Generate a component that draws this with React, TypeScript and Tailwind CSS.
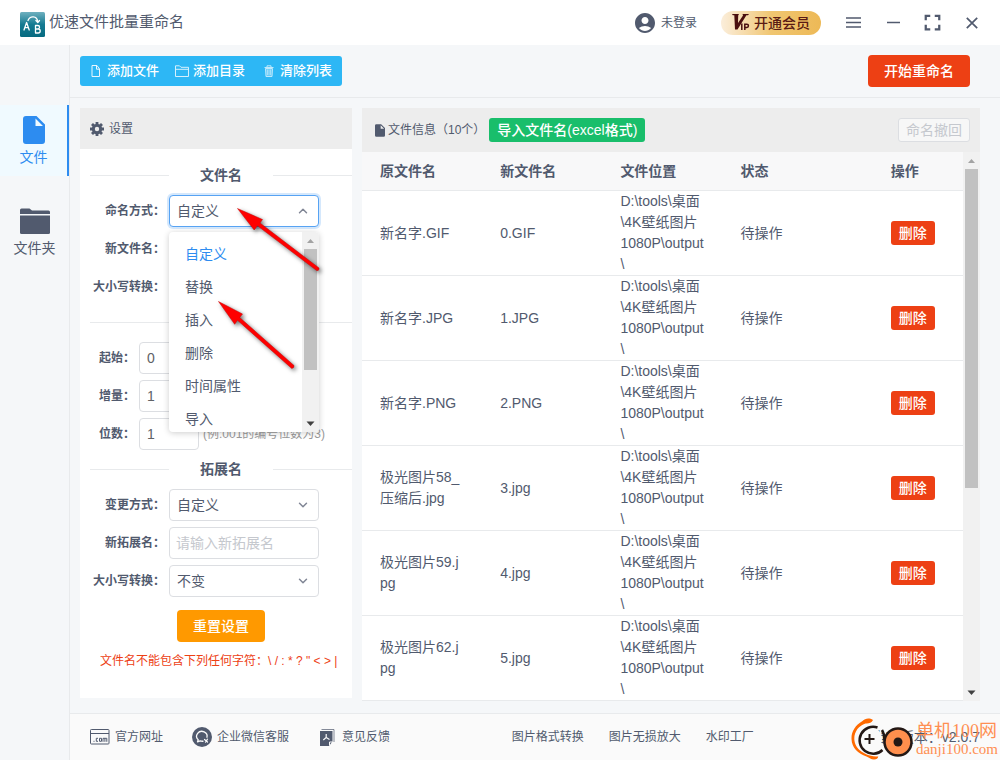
import type { ReactNode } from "react";
import { ChevronDown, ChevronUp } from "lucide-react";
import { MdAccountCircle, MdFullscreen } from "react-icons/md";

const files = [
  { name: "新名字.GIF", next: "0.GIF" },
  { name: "新名字.JPG", next: "1.JPG" },
  { name: "新名字.PNG", next: "2.PNG" },
  { name: "极光图片58_压缩后.jpg", next: "3.jpg" },
  { name: "极光图片59.jpg", next: "4.jpg" },
  { name: "极光图片62.jpg", next: "5.jpg" },
];

const location = "D:\\tools\\桌面\n\\4K壁纸图片\n1080P\\output\n\\";

const modes = ["自定义", "替换", "插入", "删除", "时间属性", "导入"];

/* ---------- icons ---------- */

function LogoIcon() {
  return (
    <svg width="25" height="25" viewBox="0 0 25 25" fill="none" aria-hidden="true">
      <defs>
        <linearGradient id="logo-bg" x1="0" y1="0" x2="0" y2="1">
          <stop offset="0" stopColor="#6fb0bf" />
          <stop offset="0.5" stopColor="#157a91" />
          <stop offset="1" stopColor="#066a80" />
        </linearGradient>
      </defs>
      <rect width="25" height="25" rx="1.5" fill="url(#logo-bg)" />
      <g stroke="#fff" strokeWidth="1.3" strokeLinecap="round" strokeLinejoin="round">
        <path d="M4 18 6.6 10.500 9.200 18M4.800 15.700h3.600" />
        <path d="M15.500 13.500v7.500h2.700a2 2 0 0 0 0-4h-2.700 2.300a1.700 1.700 0 0 0 0-3.500z" />
        <path d="M8 8.500c2-5 9-5 9.800 1.300M15.900 8.500l1.900 2 1.700-2" />
      </g>
    </svg>
  );
}

function VipIcon() {
  return (
    <svg width="18" height="17" viewBox="0 0 18 17" aria-hidden="true">
      <path d="M0 0h7l-.8 1.500L6 9l5-7.500L10.500 0H17l-1 1.300h-1.600L5.500 15.500H3L2.300 1.300H.8z" fill="#4a0f0f" />
      <g fill="none" stroke="#4a0f0f" strokeWidth="1.500">
        <path d="M9.800 9.500V16" />
        <path d="M12.800 16v-5.800h2a1.600 1.600 0 0 1 0 3.300h-2" />
      </g>
    </svg>
  );
}

function FileOutlineIcon() {
  return (
    <svg width="10" height="12" viewBox="0 0 10 12" fill="none" stroke="currentColor" strokeLinejoin="round" className="opacity-90" aria-hidden="true">
      <path d="M1 .500h5L8.500 4v7.500H1zM5.500.500V4.200h3" />
    </svg>
  );
}

function FolderOutlineIcon() {
  return (
    <svg width="14" height="12" viewBox="0 0 14 12" fill="none" stroke="currentColor" strokeLinejoin="round" className="opacity-80" aria-hidden="true">
      <path d="M.500 11.500V.800h4L6 2.300h7.500v9.200zM.500 4.300h13" />
    </svg>
  );
}

function TrashIcon() {
  return (
    <svg width="10" height="12" viewBox="0 0 10 12" fill="none" stroke="currentColor" className="opacity-70" aria-hidden="true">
      <path d="M.500 2.500h9M3 2.500V.800h4v1.700" />
      <path d="M1.500 3.500 2 11.500h6l.500-8z" fill="currentColor" fillOpacity=".4" />
      <path d="M3.800 4.500v5.500M6.200 4.500v5.500" />
    </svg>
  );
}

function GearIcon() {
  return (
    <svg width="14" height="14" viewBox="0 0 14 14" fill="none" stroke="currentColor" aria-hidden="true">
      <circle cx="7" cy="7" r="3.700" strokeWidth="3" />
      <path d="M7 0v2.500M7 11.500V14M0 7h2.500M11.500 7H14M2 2l1.800 1.800M10.200 10.200 12 12M12 2l-1.800 1.800M3.800 10.200 2 12" strokeWidth="2.800" />
    </svg>
  );
}

function DocumentIcon({ className }: { className: string }) {
  return (
    <svg viewBox="0 0 22 28" className={className} aria-hidden="true">
      <path
        d="M3 0h10.500L22 8.500V25a3 3 0 0 1-3 3H3a3 3 0 0 1-3-3V3a3 3 0 0 1 3-3zM12.500 2.500V10H20z"
        fill="currentColor"
        fillRule="evenodd"
      />
    </svg>
  );
}

function FolderIcon() {
  return (
    <svg width="30" height="26" viewBox="0 0 30 26" fill="currentColor" aria-hidden="true">
      <path d="M0 6V2a1.500 1.500 0 0 1 1.500-1.500h8L12 2.500h16.500A1.500 1.500 0 0 1 30 4v2z" />
      <path d="M0 7.500h30v17a1.500 1.500 0 0 1-1.500 1.500h-27A1.500 1.500 0 0 1 0 24.500z" />
    </svg>
  );
}

function SiteIcon() {
  return (
    <svg width="20" height="16" viewBox="0 0 20 16" fill="none" stroke="currentColor" aria-hidden="true">
      <rect x=".5" y=".5" width="18.500" height="14.500" rx=".8" />
      <path d="M.500 4.500h18.500" />
      <path d="M3.500 12.300h1M8 9.300H6.300v3H8M9.500 9.300h2v3h-2zM13 12.800V9.300h3.800v3.500M14.900 9.300v3.500" />
    </svg>
  );
}

function ChatIcon() {
  return (
    <svg width="20" height="20" viewBox="0 0 20 20" fill="none" aria-hidden="true">
      <circle cx="10" cy="10" r="10" fill="#515a6e" />
      <path d="M14.800 10.800A5.200 4.900 0 1 0 6.200 12.800L5.500 14.800 8.200 13.900q1.600.6 3.300.2" stroke="#fafafa" strokeWidth="1.300" strokeLinejoin="round" />
      <path d="M12.500 12.500l3 2.500M15.500 12.200l-2 3" stroke="#fafafa" strokeWidth="1.200" strokeLinecap="round" />
    </svg>
  );
}

function FeedbackIcon() {
  return (
    <svg width="15" height="17" viewBox="0 0 15 17" aria-hidden="true">
      <path d="M1.500 .500H14V13" fill="none" stroke="#515a6e" strokeOpacity=".7" />
      <path d="M0 2h12.500v10.500L9 17H0z" fill="#515a6e" />
      <path d="M9.500 16.500v-3.500h3.500" fill="none" stroke="#fafafa" />
      <path d="M6.200 5v3.500L3.300 11M6.200 8.500 9.500 10.500" fill="none" stroke="#fafafa" strokeWidth="1.200" />
    </svg>
  );
}

/* ---------- small pieces ---------- */

function Divider({ title }: { title?: string }) {
  return (
    <div className="flex h-6 items-center">
      <span className="h-px flex-1 bg-[#e8eaec]" />
      {title && <h3 className="w-[104px] text-center text-sm font-bold">{title}</h3>}
      <span className="h-px flex-1 bg-[#e8eaec]" />
    </div>
  );
}

function Row({ id, label, narrow, children }: { id: string; label: string; narrow?: boolean; children: ReactNode }) {
  return (
    <div className="flex h-8 items-center gap-1">
      <label
        htmlFor={id}
        className={`shrink-0 text-right text-xs font-bold whitespace-nowrap ${narrow ? "w-[45px]" : "w-[75px]"}`}
      >
        {label}
      </label>
      {children}
    </div>
  );
}

function Select({ id, value, open }: { id: string; value: string; open?: boolean }) {
  const Arrow = open ? ChevronUp : ChevronDown;
  return (
    <div className="relative w-[150px]">
      <select
        id={id}
        defaultValue={value}
        className={`h-8 w-full appearance-none rounded border bg-white px-[7px] text-sm outline-none ${
          open ? "border-[#57a3f3] ring-2 ring-[#2d8cf0]/20" : "border-[#dcdee2]"
        }`}
      >
        <option>{value}</option>
      </select>
      <Arrow size={14} strokeWidth={2.5} className="pointer-events-none absolute top-[9px] right-[9px] text-[#808695]" />
    </div>
  );
}

function NumberField({ id, value }: { id: string; value: string }) {
  return (
    <input
      id={id}
      defaultValue={value}
      className="h-8 w-[60px] rounded border border-[#dcdee2] bg-white px-[7px] text-sm text-[#606266]"
    />
  );
}

function ScrollBar({ thumb }: { thumb: string }) {
  return (
    <div className="flex w-[17px] shrink-0 flex-col items-center bg-[#f1f1f1]">
      <svg width="17" height="17" viewBox="0 0 17 17" className="shrink-0" aria-hidden="true">
        <path d="M5 11l3.500-4L12 11z" fill="#a3a3a3" />
      </svg>
      <div className="min-h-0 w-[13px] flex-1">
        <div className={`bg-[#c1c1c1] ${thumb}`} />
      </div>
      <svg width="17" height="17" viewBox="0 0 17 17" className="shrink-0" aria-hidden="true">
        <path d="M4.500 6.500l4 4.500 4-4.500z" fill="#404040" />
      </svg>
    </div>
  );
}

function ModeMenu() {
  return (
    <div className="absolute top-[124px] left-[89px] z-10 flex h-[200px] w-[150px] overflow-hidden rounded bg-white shadow-[0_1px_6px_rgba(0,0,0,0.2)]">
      <ul role="listbox" aria-label="命名方式" className="flex-1 pt-[6px]">
        {modes.map((mode, i) => (
          <li
            key={mode}
            role="option"
            aria-selected={i === 0}
            className={`h-[33px] pl-4 text-sm leading-[33px] ${i === 0 ? "text-[#2d8cf0]" : ""}`}
          >
            {mode}
          </li>
        ))}
      </ul>
      <ScrollBar thumb="h-[73%]" />
    </div>
  );
}

// red pointers drawn over the select and its menu
function Arrows() {
  return (
    <svg
      width="272"
      height="300"
      viewBox="0 0 272 300"
      className="pointer-events-none absolute top-0 left-0 z-20 drop-shadow-[2px_2px_2px_rgba(0,0,0,0.55)]"
      aria-hidden="true"
    >
      <g fill="#fe0000" stroke="#c40808" strokeWidth=".5">
        <path d="M157.500 100.500 182.500 111.500l-2.500 3.500 59 45q.5 2.500-2 2.800L177.500 117.800l-3.300 4.200z" />
        <path d="M138.500 193.500 162.500 206l-2.800 3.500 54.300 48q.4 2.500-2.200 3L157.500 212.300l-2.800 4z" />
      </g>
    </svg>
  );
}

function Watermark() {
  return (
    <div className="absolute top-[4px] right-[2px] flex items-center gap-[2px] text-[#ff8f52]">
      <svg width="64" height="42" viewBox="0 0 64 42" fill="none" aria-hidden="true">
        <path
          d="M23 2C19-.5 15 .5 12.500 3 5 7.500 1.300 13.500 1.500 21c.3 9 6.500 14.500 15 17.500 3 1.500 4.500 3 7.500 3 2.500 0 4-1 4.300-3C15 38.500 4.500 31 4.300 21 4.200 13.500 9 7.500 15.500 5.500c3 .3 6-.5 7.500-3.500z"
          fill="#ff6a00"
        />
        <circle cx="19.500" cy="21" r="12.500" fill="#fafafa" />
        <path d="M27.500 9.500A13.500 13.500 0 1 0 32.500 32" stroke="#231815" strokeWidth="2.500" />
        <path d="M19.500 16v10M14.500 21h10" stroke="#231815" strokeWidth="2" />
        <circle cx="48" cy="24" r="13.500" fill="#ff8f4d" stroke="#231815" strokeWidth="2.500" />
        <circle cx="48" cy="24" r="4.500" fill="#231815" />
        <path d="M32 12q2.500 4 2.500 10" stroke="#231815" strokeWidth="2.500" />
      </svg>
      <div className="font-['Liberation_Serif','Noto_Sans_CJK_SC',serif] whitespace-nowrap">
        <div className="text-lg leading-[20px]">单机100网</div>
        <div className="text-[15px] leading-[17px]">danji100.com</div>
      </div>
    </div>
  );
}

/* ---------- page sections ---------- */

function TitleBar() {
  return (
    <header className="flex h-[45px] items-center bg-white pr-[22px] pl-5">
      <div className="pt-1">
        <LogoIcon />
      </div>
      <h1 className="ml-1 text-[15px]">优速文件批量重命名</h1>
      <div className="ml-auto flex items-center">
        <MdAccountCircle size={24} />
        <a href="#login" className="ml-1 text-xs">未登录</a>
        <button className="ml-6 flex h-6 w-[100px] items-center justify-center gap-1 rounded-full bg-linear-to-r from-[#fbeedb] via-[#f0c671] to-[#edb956] text-sm font-medium text-[#5a1a14]">
          <VipIcon />
          <span>开通会员</span>
        </button>
        <button aria-label="菜单" className="ml-[25px]">
          <svg width="15" height="11" viewBox="0 0 15 11" stroke="currentColor" strokeWidth="1.500">
            <path d="M0 1h15M0 5.500h15M0 10h15" />
          </svg>
        </button>
        <button aria-label="最小化" className="ml-[26px]">
          <svg width="13" height="11" viewBox="0 0 13 11" stroke="currentColor" strokeWidth="1.500">
            <path d="M0 5.500h13" />
          </svg>
        </button>
        <button aria-label="全屏" className="ml-[19px]">
          <MdFullscreen size={27} />
        </button>
        <button aria-label="关闭" className="ml-5">
          <svg width="12" height="12" viewBox="0 0 12 12" stroke="currentColor" strokeWidth="1.700">
            <path d="M.800.800l10.400 10.400M11.200.800.800 11.200" />
          </svg>
        </button>
      </div>
    </header>
  );
}

function SideNav() {
  return (
    <nav className="flex w-[70px] shrink-0 flex-col gap-5 border-r border-[#e8eaec] pt-[60px] text-sm">
      <a href="#file" className="flex h-[71px] flex-col items-center border-r-2 border-[#2d8cf0] bg-[#f0faff] pt-[11px] text-[#2d8cf0]">
        <DocumentIcon className="h-7 w-[22px]" />
        <span className="mt-[3px]">文件</span>
      </a>
      <a href="#folder" className="flex h-[71px] flex-col items-center pt-3">
        <FolderIcon />
        <span className="mt-1">文件夹</span>
      </a>
    </nav>
  );
}

function Toolbar() {
  return (
    <div className="flex h-[53px] items-center justify-between border-b border-[#e8eaec] pr-[30px] pl-[10px]">
      <div className="flex h-[30px] overflow-hidden rounded-[3px] bg-[#2db7f5] text-[13px] font-medium text-white">
        <button className="flex items-center gap-[6px] pr-2 pl-[11px]">
          <FileOutlineIcon />
          添加文件
        </button>
        <button className="flex items-center gap-1 px-2">
          <FolderOutlineIcon />
          添加目录
        </button>
        <button className="flex items-center gap-[6px] pr-[10px] pl-[11px]">
          <TrashIcon />
          清除列表
        </button>
      </div>
      <button className="h-8 rounded bg-[#ed4014] px-4 text-sm font-medium text-white">开始重命名</button>
    </div>
  );
}

function SettingsPanel() {
  return (
    <section className="relative w-[272px] shrink-0 bg-white pb-[25px]">
      <h2 className="flex h-[41px] items-center gap-[5px] bg-[#ededed] pl-[10px] text-xs">
        <GearIcon />
        设置
      </h2>
      <form className="pt-[14px] pl-[10px]">
        <Divider title="文件名" />
        <div className="mt-2 mb-[7px] flex flex-col gap-[6px]">
          <Row id="mode" label="命名方式：">
            <Select id="mode" value="自定义" open />
          </Row>
          <Row id="new-name" label="新文件名：">
            <input id="new-name" className="h-8 w-[150px] rounded border border-[#dcdee2] bg-white px-[7px] text-sm" />
          </Row>
          <Row id="name-case" label="大小写转换：">
            <Select id="name-case" value="" />
          </Row>
        </div>
        <Divider />
        <div className="mt-2 mb-[7px] flex flex-col gap-[6px]">
          <Row id="start" label="起始：" narrow>
            <NumberField id="start" value="0" />
          </Row>
          <Row id="step" label="增量：" narrow>
            <NumberField id="step" value="1" />
          </Row>
          <Row id="digits" label="位数：" narrow>
            <NumberField id="digits" value="1" />
            <span className="text-xs whitespace-nowrap text-[#999]">(例:001的编号位数为3)</span>
          </Row>
        </div>
        <Divider title="拓展名" />
        <div className="mt-2 flex flex-col gap-[6px]">
          <Row id="ext-mode" label="变更方式：">
            <Select id="ext-mode" value="自定义" />
          </Row>
          <Row id="new-ext" label="新拓展名：">
            <input
              id="new-ext"
              placeholder="请输入新拓展名"
              className="h-8 w-[150px] rounded border border-[#dcdee2] bg-white px-[6px] text-sm placeholder:text-[#c5c8ce]"
            />
          </Row>
          <Row id="ext-case" label="大小写转换：">
            <Select id="ext-case" value="不变" />
          </Row>
        </div>
        <div className="mt-[13px] text-center">
          <button type="button" className="h-8 rounded bg-[#ff9900] px-4 text-sm font-medium text-white">重置设置</button>
        </div>
        <p className="mt-[7px] pl-[10px] text-xs leading-6 whitespace-nowrap text-[#ed4014]">
          文件名不能包含下列任何字符：\ / : * ? " &lt; &gt; |
        </p>
      </form>
      <ModeMenu />
      <Arrows />
    </section>
  );
}

function FilePanel() {
  return (
    <section className="min-w-0 flex-1 bg-white">
      <div className="flex h-11 items-center bg-[#ededed] pr-[10px] pl-[13px]">
        <DocumentIcon className="h-[13px] w-[10px]" />
        <h2 className="ml-[3px] text-xs">文件信息（10个）</h2>
        <button className="ml-1 h-6 rounded-[3px] bg-[#19be6b] px-2 text-sm font-medium whitespace-nowrap text-white">
          导入文件名(excel格式)
        </button>
        <button disabled className="ml-auto h-6 rounded-[3px] border border-[#dcdee2] bg-[#f7f7f7] px-[7px] text-sm text-[#c5c8ce]">
          命名撤回
        </button>
      </div>
      <div className="flex">
        <table className="w-full table-fixed border-separate border-spacing-0 text-left text-sm leading-[21px]">
          <colgroup>
            <col className="w-[20%]" />
            <col className="w-[20%]" />
            <col className="w-[20%]" />
            <col className="w-[25%]" />
            <col className="w-[15%]" />
          </colgroup>
          <thead>
            <tr className="h-[39px] bg-[#f8f8f9]">
              {["原文件名", "新文件名", "文件位置", "状态", "操作"].map((title) => (
                <th key={title} className="border-b border-[#e8eaec] px-[18px] font-bold">{title}</th>
              ))}
            </tr>
          </thead>
          <tbody>
            {files.map((file) => (
              <tr key={file.name} className="[&>td]:border-b [&>td]:border-[#e8eaec] [&>td]:px-[18px]">
                <td className="break-all">{file.name}</td>
                <td>{file.next}</td>
                <td className="whitespace-pre">{location}</td>
                <td>待操作</td>
                <td>
                  <button className="block h-6 rounded-[3px] bg-[#ed4014] px-2 text-sm font-medium whitespace-nowrap text-white">
                    删除
                  </button>
                </td>
              </tr>
            ))}
          </tbody>
        </table>
        <ScrollBar thumb="h-[62%]" />
      </div>
    </section>
  );
}

function Footer() {
  return (
    <footer className="relative flex h-[47px] shrink-0 items-center border-t border-[#e8eaec] bg-[#fafafa] pl-5 text-xs whitespace-nowrap">
      <a href="#site" className="flex items-center gap-[5px]"><SiteIcon />官方网址</a>
      <a href="#service" className="ml-[29px] flex items-center gap-[5px]"><ChatIcon />企业微信客服</a>
      <a href="#feedback" className="ml-[31px] flex items-center gap-[7px]"><FeedbackIcon />意见反馈</a>
      <div className="ml-auto flex gap-[25px]">
        <a href="#convert">图片格式转换</a>
        <a href="#enlarge">图片无损放大</a>
        <a href="#watermark">水印工厂</a>
      </div>
      <span className="mr-5 ml-[118px] text-sm">当前版本：v2.0.7</span>
      <Watermark />
    </footer>
  );
}

export default function App() {
  return (
    <div className="flex min-h-screen flex-col bg-[#f5f7f9] font-['Liberation_Sans','Noto_Sans_CJK_SC',sans-serif] text-[#515a6e]">
      <TitleBar />
      <div className="flex flex-1">
        <SideNav />
        <main className="flex min-w-0 flex-1 flex-col">
          <Toolbar />
          <div className="flex flex-1 items-start gap-[10px] pt-[10px] pr-5 pb-3 pl-[10px]">
            <SettingsPanel />
            <FilePanel />
          </div>
          <Footer />
        </main>
      </div>
    </div>
  );
}
